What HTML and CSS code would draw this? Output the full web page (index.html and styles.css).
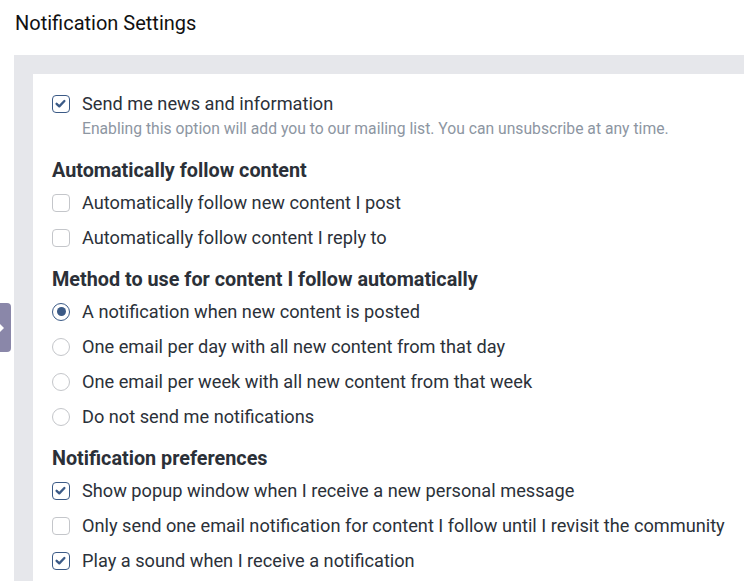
FILE: index.html
```html
<!DOCTYPE html>
<html>
<head>
<meta charset="utf-8">
<link rel="stylesheet" href="styles.css">
</head>
<body>
<h1 class="title">Notification Settings</h1>
<div class="outer">
  <div class="panel">
    <label class="opt"><span class="box checked"><svg viewBox="0 0 17 17" width="17" height="17"><path d="M4.6 8.8 L7.3 11.4 L12.4 6" fill="none" stroke="#3b5a86" stroke-width="2.3" stroke-linecap="round" stroke-linejoin="round"/></svg></span><span class="lbl">Send me news and information</span></label>
    <p class="desc">Enabling this option will add you to our mailing list. You can unsubscribe at any time.</p>

    <h2 class="head first">Automatically follow content</h2>
    <label class="opt"><span class="box"></span><span class="lbl">Automatically follow new content I post</span></label>
    <label class="opt"><span class="box"></span><span class="lbl">Automatically follow content I reply to</span></label>

    <h2 class="head">Method to use for content I follow automatically</h2>
    <label class="opt"><span class="radio checked"></span><span class="lbl">A notification when new content is posted</span></label>
    <label class="opt"><span class="radio"></span><span class="lbl">One email per day with all new content from that day</span></label>
    <label class="opt"><span class="radio"></span><span class="lbl">One email per week with all new content from that week</span></label>
    <label class="opt"><span class="radio"></span><span class="lbl">Do not send me notifications</span></label>

    <h2 class="head">Notification preferences</h2>
    <label class="opt"><span class="box checked"><svg viewBox="0 0 17 17" width="17" height="17"><path d="M4.6 8.8 L7.3 11.4 L12.4 6" fill="none" stroke="#3b5a86" stroke-width="2.3" stroke-linecap="round" stroke-linejoin="round"/></svg></span><span class="lbl">Show popup window when I receive a new personal message</span></label>
    <label class="opt"><span class="box"></span><span class="lbl">Only send one email notification for content I follow until I revisit the community</span></label>
    <label class="opt"><span class="box checked"><svg viewBox="0 0 17 17" width="17" height="17"><path d="M4.6 8.8 L7.3 11.4 L12.4 6" fill="none" stroke="#3b5a86" stroke-width="2.3" stroke-linecap="round" stroke-linejoin="round"/></svg></span><span class="lbl">Play a sound when I receive a notification</span></label>
  </div>
</div>
<div class="tab"><svg viewBox="0 0 6 10" width="6" height="10"><path d="M0 1 L4 5 L0 9 Z" fill="#ffffff"/></svg></div>
</body>
</html>
```
FILE: styles.css
```css
html, body {
  margin: 0;
  padding: 0;
  background: #ffffff;
  font-family: Roboto, "Liberation Sans", sans-serif;
  overflow: hidden;
  height: 581px;
}
.title {
  margin: 0;
  padding: 11px 0 0 15px;
  height: 55px;
  box-sizing: border-box;
  font-size: 20px;
  line-height: 24px;
  font-weight: 400;
  color: #111111;
}
.outer {
  margin-left: 14px;
  background: #e6e7eb;
  padding: 19px 0 0 19px;
  height: 526px;
  box-sizing: border-box;
}
.panel {
  background: #ffffff;
  padding: 12px 0 0 19px;
  height: 507px;
  box-sizing: border-box;
}
.opt {
  display: flex;
  align-items: center;
  height: 35px;
  white-space: nowrap;
}
.lbl {
  font-size: 18.2px;
  color: #2b3139;
  margin-left: 12px;
}
.box {
  width: 18px;
  height: 18px;
  box-sizing: border-box;
  border: 1.5px solid #c4c6ca;
  border-radius: 4px;
  flex: none;
  position: relative;
}
.box.checked {
  border-color: #3b5a86;
}
.box svg {
  position: absolute;
  left: -1px;
  top: -1px;
}
.radio {
  width: 18px;
  height: 18px;
  box-sizing: border-box;
  border: 1.5px solid #c4c6ca;
  border-radius: 50%;
  flex: none;
  display: flex;
  align-items: center;
  justify-content: center;
}
.radio.checked {
  border-color: #3b5a86;
}
.radio.checked::after {
  content: "";
  width: 9px;
  height: 9px;
  border-radius: 50%;
  background: #3b5a86;
}
.desc {
  margin: -2px 0 0 30px;
  font-size: 15.7px;
  line-height: 20px;
  color: #8d96a2;
  white-space: nowrap;
}
.head {
  margin: 11px 0 0 0;
  font-size: 19.8px;
  line-height: 28px;
  font-weight: 700;
  color: #2b3038;
}
.head.first {
  margin-top: 18px;
}
.tab {
  position: absolute;
  left: 0;
  top: 303px;
  width: 11px;
  height: 49px;
  background: #8a87a9;
  border-radius: 0 4px 4px 0;
  display: flex;
  align-items: center;
}
```
